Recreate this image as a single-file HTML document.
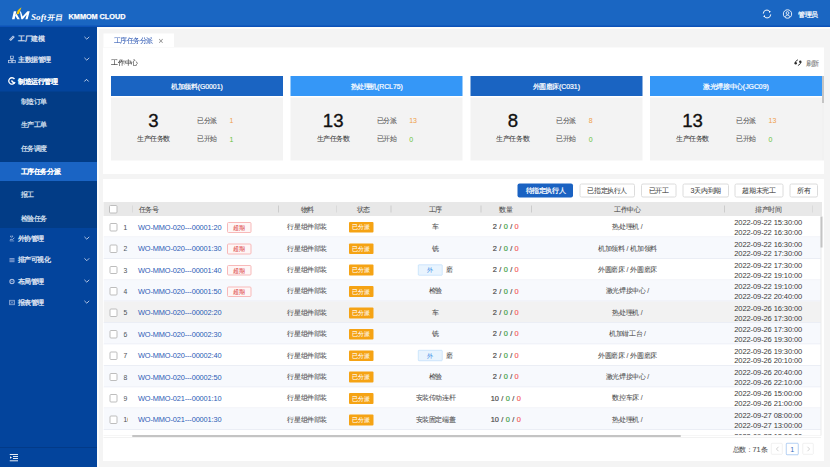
<!DOCTYPE html><html><head><meta charset="utf-8"><style>
*{margin:0;padding:0;box-sizing:border-box}
html,body{width:830px;height:467px;overflow:hidden;background:#f4f4f4;font-family:"Liberation Sans",sans-serif;color:#333;font-size:13.2px;position:relative}
.a{position:absolute;white-space:nowrap;-webkit-text-stroke-width:0.12px}
</style></head><body><div style="position:absolute;left:0;top:0;width:1660px;height:934px;transform:scale(0.5);transform-origin:0 0"><div class="a" style="left:0px;top:0px;width:1660px;height:54px;background:#1a66c2;"></div>
<div class="a" style="left:0px;top:51.2px;width:1660px;height:2.8px;background:#0c52b8;"></div>
<div class="a" style="left:194px;top:54px;width:1466px;height:4.4px;background:#fdfdfb;"></div>
<svg class="a" style="left:0;top:0" width="140" height="54" viewBox="0 0 70 27">
<path d="M12.0 19.3 L14.6 19.3 L16.3 11.2 L13.8 11.2 Z" fill="#fff"/>
<path d="M15.0 15.2 L16.4 13.6 L19.8 19.3 L17.4 19.3 Z" fill="#fff"/>
<path d="M16.5 14.3 C16.7 11.4 18.5 9.0 21.5 7.3 C20.6 9.6 19.7 11.8 18.9 14.0 Z" fill="#f3c70c"/>
<path d="M19.9 11.5 L20.9 11.5 L22.6 16.4 L27.4 11.2 L29.7 11.2 L27.6 19.3 L25.4 19.3 L26.7 14.4 L22.8 19.3 L21.3 19.3 Z" fill="#fff"/>
<text x="31" y="19.7" font-family="Liberation Serif" font-style="italic" font-weight="bold" font-size="7.8" textLength="15.2" lengthAdjust="spacingAndGlyphs" fill="#fff">Soft</text>
<text x="47" y="19.7" font-size="7" font-weight="bold" textLength="15.6" lengthAdjust="spacingAndGlyphs" fill="#fff" transform="translate(47 19.7) skewX(-8) translate(-47 -19.7)">开目</text>
</svg>
<div class="a" style="left:137.2px;top:19.8px;line-height:24px;font-size:14.6px;color:#fff;-webkit-text-stroke-width:0;font-weight:bold;letter-spacing:-0.06px;-webkit-text-stroke-width:0.5px">KMMOM CLOUD</div>
<svg class="a" style="left:1524px;top:18px" width="20" height="20" viewBox="0 0 10 10">
<path d="M1.3 4.6 A3.5 3.5 0 0 1 7.9 2.9" fill="none" stroke="#fff" stroke-width="0.95"/>
<path d="M8.7 5.4 A3.5 3.5 0 0 1 2.1 7.1" fill="none" stroke="#fff" stroke-width="0.95"/>
<path d="M6.7 1.5 L8.9 2.6 L7.2 4.1 Z" fill="#fff"/>
<path d="M3.3 8.5 L1.1 7.4 L2.8 5.9 Z" fill="#fff"/>
</svg>
<svg class="a" style="left:1565px;top:17.6px" width="20" height="20" viewBox="0 0 10 10">
<circle cx="5" cy="5" r="4.2" fill="none" stroke="#fff" stroke-width="0.9"/>
<circle cx="5" cy="4" r="1.4" fill="none" stroke="#fff" stroke-width="0.8"/>
<path d="M2.8 7.8 Q3.1 6 5 6 Q6.9 6 7.2 7.8" fill="none" stroke="#fff" stroke-width="0.8"/>
</svg>
<div class="a" style="left:1596.4px;top:16.6px;line-height:24px;font-size:13px;letter-spacing:0.2px;color:#fff;-webkit-text-stroke-width:0.44px">管理员</div>
<div class="a" style="left:0px;top:54px;width:194px;height:880px;background:#03449c;"></div>
<div class="a" style="left:194px;top:54px;width:4px;height:880px;background:#fbfcfd;"></div>
<div class="a" style="left:0px;top:183.4px;width:194px;height:272.8px;background:#023c86;"></div>
<div class="a" style="left:0px;top:323.6px;width:194px;height:38.4px;background:#1a64c4;"></div>
<div class="a" style="left:36px;top:64.6px;line-height:24px;font-size:13px;letter-spacing:0.2px;color:#e4eaf5;-webkit-text-stroke-width:0.5px">工厂建模</div>
<svg class="a" style="left:167px;top:69.6px" width="14" height="12" viewBox="0 0 7 6"><path d="M0.9 1.8 L3.3 4.2 L5.7 1.8" fill="none" stroke="#b9c9e6" stroke-width="0.95"/></svg>
<div class="a" style="left:36px;top:107.4px;line-height:24px;font-size:13px;letter-spacing:0.2px;color:#e4eaf5;-webkit-text-stroke-width:0.5px">主数据管理</div>
<svg class="a" style="left:167px;top:112.4px" width="14" height="12" viewBox="0 0 7 6"><path d="M0.9 1.8 L3.3 4.2 L5.7 1.8" fill="none" stroke="#b9c9e6" stroke-width="0.95"/></svg>
<div class="a" style="left:36px;top:151.4px;line-height:24px;font-size:13px;letter-spacing:0.2px;color:#fff;font-weight:bold;">制造运行管理</div>
<svg class="a" style="left:167px;top:155.4px" width="12" height="12" viewBox="0 0 6 6"><path d="M0.8 4 L3 1.8 L5.2 4" fill="none" stroke="#dce5f3" stroke-width="0.9"/></svg>
<svg class="a" style="left:16px;top:68px" width="16" height="16" viewBox="0 0 8 8"><path d="M1.0 5.4 L5.0 1.4 L6.8 3.0 L2.8 7.0 Z" fill="#c3d0e9"/><path d="M2.2 5.6 L5.2 2.6" stroke="#03449c" stroke-width="0.5"/></svg>
<svg class="a" style="left:16px;top:111.2px" width="16" height="16" viewBox="0 0 8 8"><rect x="2.5" y="0.5" width="2.8" height="2.4" fill="none" stroke="#c3d0e9" stroke-width="0.75"/><path d="M3.9 2.9V4.3M2.1 4.3H5.7M2.1 4.3V4.9M5.7 4.3V4.9" stroke="#c3d0e9" stroke-width="0.6"/><rect x="0.6" y="4.9" width="3" height="2.4" fill="none" stroke="#c3d0e9" stroke-width="0.75"/><rect x="4.3" y="4.9" width="3" height="2.4" fill="none" stroke="#c3d0e9" stroke-width="0.75"/></svg>
<svg class="a" style="left:16px;top:154px" width="16" height="16" viewBox="0 0 8 8"><path d="M6.5 2.0 A3.2 3.2 0 1 0 7.0 5.0" fill="none" stroke="#fff" stroke-width="1.3"/><path d="M3.4 3.4 L6.3 6.5" stroke="#fff" stroke-width="1.5"/></svg>
<div class="a" style="left:41.4px;top:191.2px;line-height:24px;font-size:13px;letter-spacing:0.2px;color:#d8e0ef;-webkit-text-stroke-width:0.44px">制造订单</div>
<div class="a" style="left:41.4px;top:238.2px;line-height:24px;font-size:13px;letter-spacing:0.2px;color:#d8e0ef;-webkit-text-stroke-width:0.44px">生产工单</div>
<div class="a" style="left:41.4px;top:285.4px;line-height:24px;font-size:13px;letter-spacing:0.2px;color:#d8e0ef;-webkit-text-stroke-width:0.44px">任务调度</div>
<div class="a" style="left:41.4px;top:331.8px;line-height:24px;font-size:13px;letter-spacing:0.2px;color:#fff;font-weight:bold;">工序任务分派</div>
<div class="a" style="left:41.4px;top:378.2px;line-height:24px;font-size:13px;letter-spacing:0.2px;color:#d8e0ef;-webkit-text-stroke-width:0.44px">报工</div>
<div class="a" style="left:41.4px;top:424.8px;line-height:24px;font-size:13px;letter-spacing:0.2px;color:#d8e0ef;-webkit-text-stroke-width:0.44px">检验任务</div>
<div class="a" style="left:35px;top:464.6px;line-height:24px;font-size:13px;letter-spacing:0.2px;color:#e4eaf5;-webkit-text-stroke-width:0.5px">外协管理</div>
<svg class="a" style="left:167px;top:469.6px" width="14" height="12" viewBox="0 0 7 6"><path d="M0.9 1.8 L3.3 4.2 L5.7 1.8" fill="none" stroke="#b9c9e6" stroke-width="0.95"/></svg>
<svg class="a" style="left:18px;top:470.6px" width="12" height="12" viewBox="0 0 6 6"><path d="M0.8 4.6 Q2.4 3.2 3.4 4.2 L5.4 2.2 M2.6 1.6 A1 1 0 1 1 2.61 1.6 M0.8 5.6 H5.2" fill="none" stroke="#a9bce0" stroke-width="0.9"/></svg>
<div class="a" style="left:35px;top:508px;line-height:24px;font-size:13px;letter-spacing:0.2px;color:#e4eaf5;-webkit-text-stroke-width:0.5px">排产可视化</div>
<svg class="a" style="left:167px;top:513px" width="14" height="12" viewBox="0 0 7 6"><path d="M0.9 1.8 L3.3 4.2 L5.7 1.8" fill="none" stroke="#b9c9e6" stroke-width="0.95"/></svg>
<svg class="a" style="left:18px;top:514px" width="12" height="12" viewBox="0 0 6 6"><rect x="0.5" y="1" width="5" height="4.2" fill="#7f9bd0"/><path d="M0.5 2.4H5.5M0.5 3.8H5.5" stroke="#03449c" stroke-width="0.4"/></svg>
<div class="a" style="left:35px;top:550.6px;line-height:24px;font-size:13px;letter-spacing:0.2px;color:#e4eaf5;-webkit-text-stroke-width:0.5px">布局管理</div>
<svg class="a" style="left:167px;top:555.6px" width="14" height="12" viewBox="0 0 7 6"><path d="M0.9 1.8 L3.3 4.2 L5.7 1.8" fill="none" stroke="#b9c9e6" stroke-width="0.95"/></svg>
<svg class="a" style="left:18px;top:556.6px" width="12" height="12" viewBox="0 0 6 6"><circle cx="3" cy="3" r="2.1" fill="none" stroke="#a9bce0" stroke-width="1.1"/><circle cx="3" cy="3" r="0.6" fill="#a9bce0"/></svg>
<div class="a" style="left:35px;top:593.4px;line-height:24px;font-size:13px;letter-spacing:0.2px;color:#e4eaf5;-webkit-text-stroke-width:0.5px">报表管理</div>
<svg class="a" style="left:167px;top:598.4px" width="14" height="12" viewBox="0 0 7 6"><path d="M0.9 1.8 L3.3 4.2 L5.7 1.8" fill="none" stroke="#b9c9e6" stroke-width="0.95"/></svg>
<svg class="a" style="left:18px;top:599.4px" width="12" height="12" viewBox="0 0 6 6"><rect x="0.7" y="0.7" width="4.6" height="4.6" fill="none" stroke="#a9bce0" stroke-width="0.8"/><path d="M1.6 1.6L4.4 4.4M4.4 1.6L1.6 4.4" stroke="#a9bce0" stroke-width="0.6"/></svg>
<div class="a" style="left:0px;top:894px;width:194px;height:2px;background:#023a88;"></div>
<svg class="a" style="left:19px;top:908px" width="18" height="16" viewBox="0 0 9 8">
<path d="M0 0.5H8.5M3.5 2.5H8.5M3.5 4.5H8.5M0 6.8H8.5" stroke="#fff" stroke-width="0.9"/>
<path d="M0.5 2.2 L2.5 3.5 L0.5 4.8 Z" fill="#fff"/>
</svg>
<div class="a" style="left:207.2px;top:67.2px;width:140.4px;height:26.8px;background:#fff;"></div>
<div class="a" style="left:227px;top:69.4px;line-height:24px;font-size:13px;letter-spacing:0.2px;color:#3d64b8;">工序任务分派</div>
<div class="a" style="left:316.6px;top:69.2px;line-height:24px;font-size:18px;color:#888;-webkit-text-stroke-width:0;-webkit-text-stroke-width:0">×</div>
<div class="a" style="left:206px;top:94.8px;width:1442px;height:253.2px;background:#fff;"></div>
<div class="a" style="left:222.8px;top:113.6px;line-height:24px;font-size:13px;letter-spacing:0.2px;color:#333;">工作中心</div>
<svg class="a" style="left:1588px;top:117px" width="16" height="16" viewBox="0 0 8 8">
<circle cx="1.7" cy="4.8" r="1.2" fill="#2a2a2a"/><path d="M1.0 4.6 Q1.4 2.2 4.0 1.2" fill="none" stroke="#2a2a2a" stroke-width="0.85"/>
<circle cx="6.3" cy="3.3" r="1.2" fill="#2a2a2a"/><path d="M7.0 3.5 Q6.6 6.0 3.9 7.1" fill="none" stroke="#2a2a2a" stroke-width="0.85"/>
</svg>
<div class="a" style="left:1611.2px;top:114.8px;line-height:24px;font-size:13px;letter-spacing:0.2px;color:#777;">刷新</div>
<div class="a" style="left:222px;top:195.2px;width:344px;height:125.6px;background:#f3f3f3;"></div>
<div class="a" style="left:222px;top:152px;width:344px;height:40px;background:#1a64c2;"></div>
<div class="a" style="left:222px;top:162px;line-height:24px;font-size:13px;letter-spacing:0.2px;color:#fff;width:344px;text-align:center;-webkit-text-stroke-width:0.4px">机加领料<span style="letter-spacing:0;font-size:13.7px">(G0001)</span></div>
<div class="a" style="left:222px;top:226.8px;line-height:24px;font-size:37.2px;color:#111;-webkit-text-stroke-width:0;width:170px;text-align:center;line-height:44px;top:218.8px;-webkit-text-stroke-width:0.7px">3</div>
<div class="a" style="left:222px;top:266.2px;line-height:24px;font-size:13px;letter-spacing:0.2px;color:#444;width:170px;text-align:center;">生产任务数</div>
<div class="a" style="left:394px;top:229px;line-height:24px;font-size:13px;letter-spacing:0.2px;color:#555;">已分派</div>
<div class="a" style="left:394px;top:265.6px;line-height:24px;font-size:13px;letter-spacing:0.2px;color:#555;">已开始</div>
<div class="a" style="left:459px;top:229px;line-height:24px;font-size:14px;color:#f0a04a;-webkit-text-stroke-width:0;">1</div>
<div class="a" style="left:459px;top:265.6px;line-height:24px;font-size:14px;color:#67c23a;-webkit-text-stroke-width:0;">1</div>
<div class="a" style="left:581.4px;top:195.2px;width:344px;height:125.6px;background:#f3f3f3;"></div>
<div class="a" style="left:581.4px;top:152px;width:344px;height:40px;background:#3597f7;"></div>
<div class="a" style="left:581.4px;top:162px;line-height:24px;font-size:13px;letter-spacing:0.2px;color:#fff;width:344px;text-align:center;-webkit-text-stroke-width:0.4px">热处理机<span style="letter-spacing:0;font-size:13.7px">(RCL75)</span></div>
<div class="a" style="left:581.4px;top:226.8px;line-height:24px;font-size:37.2px;color:#111;-webkit-text-stroke-width:0;width:170px;text-align:center;line-height:44px;top:218.8px;-webkit-text-stroke-width:0.7px">13</div>
<div class="a" style="left:581.4px;top:266.2px;line-height:24px;font-size:13px;letter-spacing:0.2px;color:#444;width:170px;text-align:center;">生产任务数</div>
<div class="a" style="left:753.4px;top:229px;line-height:24px;font-size:13px;letter-spacing:0.2px;color:#555;">已分派</div>
<div class="a" style="left:753.4px;top:265.6px;line-height:24px;font-size:13px;letter-spacing:0.2px;color:#555;">已开始</div>
<div class="a" style="left:818.4px;top:229px;line-height:24px;font-size:14px;color:#f0a04a;-webkit-text-stroke-width:0;">13</div>
<div class="a" style="left:818.4px;top:265.6px;line-height:24px;font-size:14px;color:#67c23a;-webkit-text-stroke-width:0;">0</div>
<div class="a" style="left:940.6px;top:195.2px;width:344px;height:125.6px;background:#f3f3f3;"></div>
<div class="a" style="left:940.6px;top:152px;width:344px;height:40px;background:#1a64c2;"></div>
<div class="a" style="left:940.6px;top:162px;line-height:24px;font-size:13px;letter-spacing:0.2px;color:#fff;width:344px;text-align:center;-webkit-text-stroke-width:0.4px">外圆磨床<span style="letter-spacing:0;font-size:13.7px">(C031)</span></div>
<div class="a" style="left:940.6px;top:226.8px;line-height:24px;font-size:37.2px;color:#111;-webkit-text-stroke-width:0;width:170px;text-align:center;line-height:44px;top:218.8px;-webkit-text-stroke-width:0.7px">8</div>
<div class="a" style="left:940.6px;top:266.2px;line-height:24px;font-size:13px;letter-spacing:0.2px;color:#444;width:170px;text-align:center;">生产任务数</div>
<div class="a" style="left:1112.6px;top:229px;line-height:24px;font-size:13px;letter-spacing:0.2px;color:#555;">已分派</div>
<div class="a" style="left:1112.6px;top:265.6px;line-height:24px;font-size:13px;letter-spacing:0.2px;color:#555;">已开始</div>
<div class="a" style="left:1177.6px;top:229px;line-height:24px;font-size:14px;color:#f0a04a;-webkit-text-stroke-width:0;">8</div>
<div class="a" style="left:1177.6px;top:265.6px;line-height:24px;font-size:14px;color:#67c23a;-webkit-text-stroke-width:0;">0</div>
<div class="a" style="left:1300px;top:195.2px;width:344px;height:125.6px;background:#f3f3f3;"></div>
<div class="a" style="left:1300px;top:152px;width:344px;height:40px;background:#3597f7;"></div>
<div class="a" style="left:1300px;top:162px;line-height:24px;font-size:13px;letter-spacing:0.2px;color:#fff;width:344px;text-align:center;-webkit-text-stroke-width:0.4px">激光焊接中心<span style="letter-spacing:0;font-size:13.7px">(JGC09)</span></div>
<div class="a" style="left:1300px;top:226.8px;line-height:24px;font-size:37.2px;color:#111;-webkit-text-stroke-width:0;width:170px;text-align:center;line-height:44px;top:218.8px;-webkit-text-stroke-width:0.7px">13</div>
<div class="a" style="left:1300px;top:266.2px;line-height:24px;font-size:13px;letter-spacing:0.2px;color:#444;width:170px;text-align:center;">生产任务数</div>
<div class="a" style="left:1472px;top:229px;line-height:24px;font-size:13px;letter-spacing:0.2px;color:#555;">已分派</div>
<div class="a" style="left:1472px;top:265.6px;line-height:24px;font-size:13px;letter-spacing:0.2px;color:#555;">已开始</div>
<div class="a" style="left:1537px;top:229px;line-height:24px;font-size:14px;color:#f0a04a;-webkit-text-stroke-width:0;">13</div>
<div class="a" style="left:1537px;top:265.6px;line-height:24px;font-size:14px;color:#67c23a;-webkit-text-stroke-width:0;">0</div>
<div class="a" style="left:1644px;top:195.2px;width:4px;height:125.6px;background:#f1f1f1;"></div>
<div class="a" style="left:1644px;top:152px;width:4px;height:54px;background:#c4c4c4;"></div>
<div class="a" style="left:206px;top:358px;width:1442px;height:564px;background:#fff;"></div>
<div class="a" style="left:1035.4px;top:366.6px;width:110.6px;height:28.8px;background:#1a62c2;border-radius:4px"></div>
<div class="a" style="left:1035.4px;top:369.4px;line-height:24px;font-size:13px;letter-spacing:0.2px;color:#fff;width:110.6px;text-align:center;-webkit-text-stroke-width:0.44px">待指定执行人</div>
<div class="a" style="left:1158.8px;top:366.6px;width:111.2px;height:28.8px;background:#fff;border:2px solid #dcdcdc;border-radius:4px"></div>
<div class="a" style="left:1158.8px;top:369.4px;line-height:24px;font-size:13px;letter-spacing:0.2px;color:#444;width:111.2px;text-align:center;">已指定执行人</div>
<div class="a" style="left:1282px;top:366.6px;width:71px;height:28.8px;background:#fff;border:2px solid #dcdcdc;border-radius:4px"></div>
<div class="a" style="left:1282px;top:369.4px;line-height:24px;font-size:13px;letter-spacing:0.2px;color:#444;width:71px;text-align:center;">已开工</div>
<div class="a" style="left:1365px;top:366.6px;width:93px;height:28.8px;background:#fff;border:2px solid #dcdcdc;border-radius:4px"></div>
<div class="a" style="left:1365px;top:369.4px;line-height:24px;font-size:13px;letter-spacing:0.2px;color:#444;width:93px;text-align:center;"><span style="letter-spacing:0;font-size:14px">3</span>天内到期</div>
<div class="a" style="left:1468.6px;top:366.6px;width:98.4px;height:28.8px;background:#fff;border:2px solid #dcdcdc;border-radius:4px"></div>
<div class="a" style="left:1468.6px;top:369.4px;line-height:24px;font-size:13px;letter-spacing:0.2px;color:#444;width:98.4px;text-align:center;">超期未完工</div>
<div class="a" style="left:1579px;top:366.6px;width:57px;height:28.8px;background:#fff;border:2px solid #dcdcdc;border-radius:4px"></div>
<div class="a" style="left:1579px;top:369.4px;line-height:24px;font-size:13px;letter-spacing:0.2px;color:#444;width:57px;text-align:center;">所有</div>
<div class="a" style="left:206.8px;top:404px;width:1437.2px;height:28.4px;background:#e8e8e8;"></div>
<div class="a" style="left:218.4px;top:410.4px;width:17px;height:17px;border:2px solid #bdbdbd;border-radius:3px;background:#fff"></div>
<div class="a" style="left:264.8px;top:411px;width:1.6px;height:14px;background:#cccccc;"></div>
<div class="a" style="left:556px;top:411px;width:1.6px;height:14px;background:#cccccc;"></div>
<div class="a" style="left:672.6px;top:411px;width:1.6px;height:14px;background:#cccccc;"></div>
<div class="a" style="left:781px;top:411px;width:1.6px;height:14px;background:#cccccc;"></div>
<div class="a" style="left:961px;top:411px;width:1.6px;height:14px;background:#cccccc;"></div>
<div class="a" style="left:1062px;top:411px;width:1.6px;height:14px;background:#cccccc;"></div>
<div class="a" style="left:1448px;top:411px;width:1.6px;height:14px;background:#cccccc;"></div>
<div class="a" style="left:1624.8px;top:411px;width:1.6px;height:14px;background:#cccccc;"></div>
<div class="a" style="left:277.2px;top:407.6px;line-height:24px;font-size:13px;letter-spacing:0.2px;color:#505050;">任务号</div>
<div class="a" style="left:556px;top:407.6px;line-height:24px;font-size:13px;letter-spacing:0.2px;color:#505050;width:116.6px;text-align:center;">物料</div>
<div class="a" style="left:672.6px;top:407.6px;line-height:24px;font-size:13px;letter-spacing:0.2px;color:#505050;width:108.4px;text-align:center;">状态</div>
<div class="a" style="left:781px;top:407.6px;line-height:24px;font-size:13px;letter-spacing:0.2px;color:#505050;width:180px;text-align:center;">工序</div>
<div class="a" style="left:961px;top:407.6px;line-height:24px;font-size:13px;letter-spacing:0.2px;color:#505050;width:101px;text-align:center;">数量</div>
<div class="a" style="left:1062px;top:407.6px;line-height:24px;font-size:13px;letter-spacing:0.2px;color:#505050;width:386px;text-align:center;">工作中心</div>
<div class="a" style="left:1448px;top:407.6px;line-height:24px;font-size:13px;letter-spacing:0.2px;color:#505050;width:176.8px;text-align:center;">排产时间</div>
<div class="a" style="left:206.8px;top:432.2px;width:1435.2px;height:438px;overflow:hidden">
<div class="a" style="left:0;top:0px;width:1435.2px;height:42.8px;background:#ffffff;border-bottom:2px solid #ebeef5"></div>
<div class="a" style="left:0;top:42.8px;width:1435.2px;height:42.8px;background:#f7f9fd;border-bottom:2px solid #ebeef5"></div>
<div class="a" style="left:0;top:85.6px;width:1435.2px;height:42.8px;background:#ffffff;border-bottom:2px solid #ebeef5"></div>
<div class="a" style="left:0;top:128.4px;width:1435.2px;height:42.8px;background:#f7f9fd;border-bottom:2px solid #ebeef5"></div>
<div class="a" style="left:0;top:171.2px;width:1435.2px;height:42.8px;background:#f2f2f2;border-bottom:2px solid #ebeef5"></div>
<div class="a" style="left:0;top:214px;width:1435.2px;height:42.8px;background:#f7f9fd;border-bottom:2px solid #ebeef5"></div>
<div class="a" style="left:0;top:256.8px;width:1435.2px;height:42.8px;background:#ffffff;border-bottom:2px solid #ebeef5"></div>
<div class="a" style="left:0;top:299.6px;width:1435.2px;height:42.8px;background:#f7f9fd;border-bottom:2px solid #ebeef5"></div>
<div class="a" style="left:0;top:342.4px;width:1435.2px;height:42.8px;background:#ffffff;border-bottom:2px solid #ebeef5"></div>
<div class="a" style="left:0;top:385.2px;width:1435.2px;height:42.8px;background:#f7f9fd;border-bottom:2px solid #ebeef5"></div>
<div class="a" style="left:0;top:428px;width:1435.2px;height:42.8px;background:#ffffff;border-bottom:2px solid #ebeef5"></div>
<div class="a" style="left:1.2px;top:0;width:1434px;height:438px">
<div class="a" style="left:11px;top:13.8px;width:15.6px;height:16.8px;border:2px solid #bdbdbd;border-radius:3px;background:#fff"></div>
<div class="a" style="left:38.6px;top:9.8px;width:9.2px;overflow:hidden;line-height:24px;font-size:14.6px;color:#555;-webkit-text-stroke-width:0">1</div>
<div class="a" style="left:68px;top:10px;line-height:24px;font-size:14.8px;color:#2c5bb5;-webkit-text-stroke-width:0;letter-spacing:-0.28px">WO-MMO-020---00001:20</div>
<div class="a" style="left:246px;top:12.2px;width:48.6px;height:21.4px;border:2px solid #f8b9b9;background:#fef6f6;border-radius:3px"></div>
<div class="a" style="left:246px;top:10.8px;line-height:24px;font-size:12px;letter-spacing:0.4px;color:#e04a4a;width:48.6px;text-align:center;">超期</div>
<div class="a" style="left:348px;top:9.8px;line-height:24px;font-size:13px;letter-spacing:0.2px;color:#505050;width:116.6px;text-align:center;">行星组件部装</div>
<div class="a" style="left:490px;top:11.6px;width:49.4px;height:21.6px;background:#f5a314;border-radius:2px"></div>
<div class="a" style="left:490px;top:10px;line-height:24px;font-size:12px;letter-spacing:0px;color:#fff;width:49.4px;text-align:center;">已分派</div>
<div class="a" style="left:573px;top:9.8px;line-height:24px;font-size:13px;letter-spacing:0.2px;color:#505050;width:180px;text-align:center;">车</div>
<div class="a" style="left:753px;top:9px;line-height:24px;font-size:14.8px;color:#4a4a4a;-webkit-text-stroke-width:0;width:101px;text-align:center;word-spacing:0.6px;-webkit-text-stroke-width:0.36px">2 / <span style="color:#3f9f47">0</span> / <span style="color:#f45f5f">0</span></div>
<div class="a" style="left:854px;top:9.8px;line-height:24px;font-size:13px;letter-spacing:0.2px;color:#505050;width:386px;text-align:center;">热处理机<span style="letter-spacing:0;font-size:13.6px"> /</span></div>
<div class="a" style="left:1240px;top:0.8px;line-height:24px;font-size:15.1px;color:#3c3c3c;-webkit-text-stroke-width:0;width:176.8px;text-align:center;letter-spacing:-0.24px">2022-09-22 15:30:00</div>
<div class="a" style="left:1240px;top:20.4px;line-height:24px;font-size:15.1px;color:#3c3c3c;-webkit-text-stroke-width:0;width:176.8px;text-align:center;letter-spacing:-0.24px">2022-09-22 16:30:00</div>
<div class="a" style="left:11px;top:56.6px;width:15.6px;height:16.8px;border:2px solid #bdbdbd;border-radius:3px;background:#fff"></div>
<div class="a" style="left:38.6px;top:52.6px;width:9.2px;overflow:hidden;line-height:24px;font-size:14.6px;color:#555;-webkit-text-stroke-width:0">2</div>
<div class="a" style="left:68px;top:52.8px;line-height:24px;font-size:14.8px;color:#2c5bb5;-webkit-text-stroke-width:0;letter-spacing:-0.28px">WO-MMO-020---00001:30</div>
<div class="a" style="left:246px;top:55px;width:48.6px;height:21.4px;border:2px solid #f8b9b9;background:#fef6f6;border-radius:3px"></div>
<div class="a" style="left:246px;top:53.6px;line-height:24px;font-size:12px;letter-spacing:0.4px;color:#e04a4a;width:48.6px;text-align:center;">超期</div>
<div class="a" style="left:348px;top:52.6px;line-height:24px;font-size:13px;letter-spacing:0.2px;color:#505050;width:116.6px;text-align:center;">行星组件部装</div>
<div class="a" style="left:490px;top:54.4px;width:49.4px;height:21.6px;background:#f5a314;border-radius:2px"></div>
<div class="a" style="left:490px;top:52.8px;line-height:24px;font-size:12px;letter-spacing:0px;color:#fff;width:49.4px;text-align:center;">已分派</div>
<div class="a" style="left:573px;top:52.6px;line-height:24px;font-size:13px;letter-spacing:0.2px;color:#505050;width:180px;text-align:center;">铣</div>
<div class="a" style="left:753px;top:51.8px;line-height:24px;font-size:14.8px;color:#4a4a4a;-webkit-text-stroke-width:0;width:101px;text-align:center;word-spacing:0.6px;-webkit-text-stroke-width:0.36px">2 / <span style="color:#3f9f47">0</span> / <span style="color:#f45f5f">0</span></div>
<div class="a" style="left:854px;top:52.6px;line-height:24px;font-size:13px;letter-spacing:0.2px;color:#505050;width:386px;text-align:center;">机加领料<span style="letter-spacing:0;font-size:13.6px"> / </span>机加领料</div>
<div class="a" style="left:1240px;top:43.6px;line-height:24px;font-size:15.1px;color:#3c3c3c;-webkit-text-stroke-width:0;width:176.8px;text-align:center;letter-spacing:-0.24px">2022-09-22 16:30:00</div>
<div class="a" style="left:1240px;top:63.2px;line-height:24px;font-size:15.1px;color:#3c3c3c;-webkit-text-stroke-width:0;width:176.8px;text-align:center;letter-spacing:-0.24px">2022-09-22 17:30:00</div>
<div class="a" style="left:11px;top:99.4px;width:15.6px;height:16.8px;border:2px solid #bdbdbd;border-radius:3px;background:#fff"></div>
<div class="a" style="left:38.6px;top:95.4px;width:9.2px;overflow:hidden;line-height:24px;font-size:14.6px;color:#555;-webkit-text-stroke-width:0">3</div>
<div class="a" style="left:68px;top:95.6px;line-height:24px;font-size:14.8px;color:#2c5bb5;-webkit-text-stroke-width:0;letter-spacing:-0.28px">WO-MMO-020---00001:40</div>
<div class="a" style="left:246px;top:97.8px;width:48.6px;height:21.4px;border:2px solid #f8b9b9;background:#fef6f6;border-radius:3px"></div>
<div class="a" style="left:246px;top:96.4px;line-height:24px;font-size:12px;letter-spacing:0.4px;color:#e04a4a;width:48.6px;text-align:center;">超期</div>
<div class="a" style="left:348px;top:95.4px;line-height:24px;font-size:13px;letter-spacing:0.2px;color:#505050;width:116.6px;text-align:center;">行星组件部装</div>
<div class="a" style="left:490px;top:97.2px;width:49.4px;height:21.6px;background:#f5a314;border-radius:2px"></div>
<div class="a" style="left:490px;top:95.6px;line-height:24px;font-size:12px;letter-spacing:0px;color:#fff;width:49.4px;text-align:center;">已分派</div>
<div class="a" style="left:628px;top:96.9px;width:48.8px;height:21.6px;border:1.6px solid #a9d2f8;background:#e9f4fe;border-radius:2px"></div>
<div class="a" style="left:628px;top:95.6px;line-height:24px;font-size:12px;letter-spacing:0px;color:#3d8ee8;width:48.8px;text-align:center;">外</div>
<div class="a" style="left:684px;top:95.4px;line-height:24px;font-size:13px;letter-spacing:0.2px;color:#505050;">磨</div>
<div class="a" style="left:753px;top:94.6px;line-height:24px;font-size:14.8px;color:#4a4a4a;-webkit-text-stroke-width:0;width:101px;text-align:center;word-spacing:0.6px;-webkit-text-stroke-width:0.36px">2 / <span style="color:#3f9f47">0</span> / <span style="color:#f45f5f">0</span></div>
<div class="a" style="left:854px;top:95.4px;line-height:24px;font-size:13px;letter-spacing:0.2px;color:#505050;width:386px;text-align:center;">外圆磨床<span style="letter-spacing:0;font-size:13.6px"> / </span>外圆磨床</div>
<div class="a" style="left:1240px;top:86.4px;line-height:24px;font-size:15.1px;color:#3c3c3c;-webkit-text-stroke-width:0;width:176.8px;text-align:center;letter-spacing:-0.24px">2022-09-22 17:30:00</div>
<div class="a" style="left:1240px;top:106px;line-height:24px;font-size:15.1px;color:#3c3c3c;-webkit-text-stroke-width:0;width:176.8px;text-align:center;letter-spacing:-0.24px">2022-09-22 19:10:00</div>
<div class="a" style="left:11px;top:142.2px;width:15.6px;height:16.8px;border:2px solid #bdbdbd;border-radius:3px;background:#fff"></div>
<div class="a" style="left:38.6px;top:138.2px;width:9.2px;overflow:hidden;line-height:24px;font-size:14.6px;color:#555;-webkit-text-stroke-width:0">4</div>
<div class="a" style="left:68px;top:138.4px;line-height:24px;font-size:14.8px;color:#2c5bb5;-webkit-text-stroke-width:0;letter-spacing:-0.28px">WO-MMO-020---00001:50</div>
<div class="a" style="left:246px;top:140.6px;width:48.6px;height:21.4px;border:2px solid #f8b9b9;background:#fef6f6;border-radius:3px"></div>
<div class="a" style="left:246px;top:139.2px;line-height:24px;font-size:12px;letter-spacing:0.4px;color:#e04a4a;width:48.6px;text-align:center;">超期</div>
<div class="a" style="left:348px;top:138.2px;line-height:24px;font-size:13px;letter-spacing:0.2px;color:#505050;width:116.6px;text-align:center;">行星组件部装</div>
<div class="a" style="left:490px;top:140px;width:49.4px;height:21.6px;background:#f5a314;border-radius:2px"></div>
<div class="a" style="left:490px;top:138.4px;line-height:24px;font-size:12px;letter-spacing:0px;color:#fff;width:49.4px;text-align:center;">已分派</div>
<div class="a" style="left:573px;top:138.2px;line-height:24px;font-size:13px;letter-spacing:0.2px;color:#505050;width:180px;text-align:center;">检验</div>
<div class="a" style="left:753px;top:137.4px;line-height:24px;font-size:14.8px;color:#4a4a4a;-webkit-text-stroke-width:0;width:101px;text-align:center;word-spacing:0.6px;-webkit-text-stroke-width:0.36px">2 / <span style="color:#3f9f47">0</span> / <span style="color:#f45f5f">0</span></div>
<div class="a" style="left:854px;top:138.2px;line-height:24px;font-size:13px;letter-spacing:0.2px;color:#505050;width:386px;text-align:center;">激光焊接中心<span style="letter-spacing:0;font-size:13.6px"> /</span></div>
<div class="a" style="left:1240px;top:129.2px;line-height:24px;font-size:15.1px;color:#3c3c3c;-webkit-text-stroke-width:0;width:176.8px;text-align:center;letter-spacing:-0.24px">2022-09-22 19:10:00</div>
<div class="a" style="left:1240px;top:148.8px;line-height:24px;font-size:15.1px;color:#3c3c3c;-webkit-text-stroke-width:0;width:176.8px;text-align:center;letter-spacing:-0.24px">2022-09-22 20:40:00</div>
<div class="a" style="left:11px;top:185px;width:15.6px;height:16.8px;border:2px solid #bdbdbd;border-radius:3px;background:#fff"></div>
<div class="a" style="left:38.6px;top:181px;width:9.2px;overflow:hidden;line-height:24px;font-size:14.6px;color:#555;-webkit-text-stroke-width:0">5</div>
<div class="a" style="left:68px;top:181.2px;line-height:24px;font-size:14.8px;color:#2c5bb5;-webkit-text-stroke-width:0;letter-spacing:-0.28px">WO-MMO-020---00002:20</div>
<div class="a" style="left:348px;top:181px;line-height:24px;font-size:13px;letter-spacing:0.2px;color:#505050;width:116.6px;text-align:center;">行星组件部装</div>
<div class="a" style="left:490px;top:182.8px;width:49.4px;height:21.6px;background:#f5a314;border-radius:2px"></div>
<div class="a" style="left:490px;top:181.2px;line-height:24px;font-size:12px;letter-spacing:0px;color:#fff;width:49.4px;text-align:center;">已分派</div>
<div class="a" style="left:573px;top:181px;line-height:24px;font-size:13px;letter-spacing:0.2px;color:#505050;width:180px;text-align:center;">车</div>
<div class="a" style="left:753px;top:180.2px;line-height:24px;font-size:14.8px;color:#4a4a4a;-webkit-text-stroke-width:0;width:101px;text-align:center;word-spacing:0.6px;-webkit-text-stroke-width:0.36px">2 / <span style="color:#3f9f47">0</span> / <span style="color:#f45f5f">0</span></div>
<div class="a" style="left:854px;top:181px;line-height:24px;font-size:13px;letter-spacing:0.2px;color:#505050;width:386px;text-align:center;">热处理机<span style="letter-spacing:0;font-size:13.6px"> /</span></div>
<div class="a" style="left:1240px;top:172px;line-height:24px;font-size:15.1px;color:#3c3c3c;-webkit-text-stroke-width:0;width:176.8px;text-align:center;letter-spacing:-0.24px">2022-09-26 16:30:00</div>
<div class="a" style="left:1240px;top:191.6px;line-height:24px;font-size:15.1px;color:#3c3c3c;-webkit-text-stroke-width:0;width:176.8px;text-align:center;letter-spacing:-0.24px">2022-09-26 17:30:00</div>
<div class="a" style="left:11px;top:227.8px;width:15.6px;height:16.8px;border:2px solid #bdbdbd;border-radius:3px;background:#fff"></div>
<div class="a" style="left:38.6px;top:223.8px;width:9.2px;overflow:hidden;line-height:24px;font-size:14.6px;color:#555;-webkit-text-stroke-width:0">6</div>
<div class="a" style="left:68px;top:224px;line-height:24px;font-size:14.8px;color:#2c5bb5;-webkit-text-stroke-width:0;letter-spacing:-0.28px">WO-MMO-020---00002:30</div>
<div class="a" style="left:348px;top:223.8px;line-height:24px;font-size:13px;letter-spacing:0.2px;color:#505050;width:116.6px;text-align:center;">行星组件部装</div>
<div class="a" style="left:490px;top:225.6px;width:49.4px;height:21.6px;background:#f5a314;border-radius:2px"></div>
<div class="a" style="left:490px;top:224px;line-height:24px;font-size:12px;letter-spacing:0px;color:#fff;width:49.4px;text-align:center;">已分派</div>
<div class="a" style="left:573px;top:223.8px;line-height:24px;font-size:13px;letter-spacing:0.2px;color:#505050;width:180px;text-align:center;">铣</div>
<div class="a" style="left:753px;top:223px;line-height:24px;font-size:14.8px;color:#4a4a4a;-webkit-text-stroke-width:0;width:101px;text-align:center;word-spacing:0.6px;-webkit-text-stroke-width:0.36px">2 / <span style="color:#3f9f47">0</span> / <span style="color:#f45f5f">0</span></div>
<div class="a" style="left:854px;top:223.8px;line-height:24px;font-size:13px;letter-spacing:0.2px;color:#505050;width:386px;text-align:center;">机加钳工台<span style="letter-spacing:0;font-size:13.6px"> /</span></div>
<div class="a" style="left:1240px;top:214.8px;line-height:24px;font-size:15.1px;color:#3c3c3c;-webkit-text-stroke-width:0;width:176.8px;text-align:center;letter-spacing:-0.24px">2022-09-26 17:30:00</div>
<div class="a" style="left:1240px;top:234.4px;line-height:24px;font-size:15.1px;color:#3c3c3c;-webkit-text-stroke-width:0;width:176.8px;text-align:center;letter-spacing:-0.24px">2022-09-26 19:30:00</div>
<div class="a" style="left:11px;top:270.6px;width:15.6px;height:16.8px;border:2px solid #bdbdbd;border-radius:3px;background:#fff"></div>
<div class="a" style="left:38.6px;top:266.6px;width:9.2px;overflow:hidden;line-height:24px;font-size:14.6px;color:#555;-webkit-text-stroke-width:0">7</div>
<div class="a" style="left:68px;top:266.8px;line-height:24px;font-size:14.8px;color:#2c5bb5;-webkit-text-stroke-width:0;letter-spacing:-0.28px">WO-MMO-020---00002:40</div>
<div class="a" style="left:348px;top:266.6px;line-height:24px;font-size:13px;letter-spacing:0.2px;color:#505050;width:116.6px;text-align:center;">行星组件部装</div>
<div class="a" style="left:490px;top:268.4px;width:49.4px;height:21.6px;background:#f5a314;border-radius:2px"></div>
<div class="a" style="left:490px;top:266.8px;line-height:24px;font-size:12px;letter-spacing:0px;color:#fff;width:49.4px;text-align:center;">已分派</div>
<div class="a" style="left:628px;top:268.1px;width:48.8px;height:21.6px;border:1.6px solid #a9d2f8;background:#e9f4fe;border-radius:2px"></div>
<div class="a" style="left:628px;top:266.8px;line-height:24px;font-size:12px;letter-spacing:0px;color:#3d8ee8;width:48.8px;text-align:center;">外</div>
<div class="a" style="left:684px;top:266.6px;line-height:24px;font-size:13px;letter-spacing:0.2px;color:#505050;">磨</div>
<div class="a" style="left:753px;top:265.8px;line-height:24px;font-size:14.8px;color:#4a4a4a;-webkit-text-stroke-width:0;width:101px;text-align:center;word-spacing:0.6px;-webkit-text-stroke-width:0.36px">2 / <span style="color:#3f9f47">0</span> / <span style="color:#f45f5f">0</span></div>
<div class="a" style="left:854px;top:266.6px;line-height:24px;font-size:13px;letter-spacing:0.2px;color:#505050;width:386px;text-align:center;">外圆磨床<span style="letter-spacing:0;font-size:13.6px"> / </span>外圆磨床</div>
<div class="a" style="left:1240px;top:257.6px;line-height:24px;font-size:15.1px;color:#3c3c3c;-webkit-text-stroke-width:0;width:176.8px;text-align:center;letter-spacing:-0.24px">2022-09-26 19:30:00</div>
<div class="a" style="left:1240px;top:277.2px;line-height:24px;font-size:15.1px;color:#3c3c3c;-webkit-text-stroke-width:0;width:176.8px;text-align:center;letter-spacing:-0.24px">2022-09-26 20:10:00</div>
<div class="a" style="left:11px;top:313.4px;width:15.6px;height:16.8px;border:2px solid #bdbdbd;border-radius:3px;background:#fff"></div>
<div class="a" style="left:38.6px;top:309.4px;width:9.2px;overflow:hidden;line-height:24px;font-size:14.6px;color:#555;-webkit-text-stroke-width:0">8</div>
<div class="a" style="left:68px;top:309.6px;line-height:24px;font-size:14.8px;color:#2c5bb5;-webkit-text-stroke-width:0;letter-spacing:-0.28px">WO-MMO-020---00002:50</div>
<div class="a" style="left:348px;top:309.4px;line-height:24px;font-size:13px;letter-spacing:0.2px;color:#505050;width:116.6px;text-align:center;">行星组件部装</div>
<div class="a" style="left:490px;top:311.2px;width:49.4px;height:21.6px;background:#f5a314;border-radius:2px"></div>
<div class="a" style="left:490px;top:309.6px;line-height:24px;font-size:12px;letter-spacing:0px;color:#fff;width:49.4px;text-align:center;">已分派</div>
<div class="a" style="left:573px;top:309.4px;line-height:24px;font-size:13px;letter-spacing:0.2px;color:#505050;width:180px;text-align:center;">检验</div>
<div class="a" style="left:753px;top:308.6px;line-height:24px;font-size:14.8px;color:#4a4a4a;-webkit-text-stroke-width:0;width:101px;text-align:center;word-spacing:0.6px;-webkit-text-stroke-width:0.36px">2 / <span style="color:#3f9f47">0</span> / <span style="color:#f45f5f">0</span></div>
<div class="a" style="left:854px;top:309.4px;line-height:24px;font-size:13px;letter-spacing:0.2px;color:#505050;width:386px;text-align:center;">激光焊接中心<span style="letter-spacing:0;font-size:13.6px"> /</span></div>
<div class="a" style="left:1240px;top:300.4px;line-height:24px;font-size:15.1px;color:#3c3c3c;-webkit-text-stroke-width:0;width:176.8px;text-align:center;letter-spacing:-0.24px">2022-09-26 20:40:00</div>
<div class="a" style="left:1240px;top:320px;line-height:24px;font-size:15.1px;color:#3c3c3c;-webkit-text-stroke-width:0;width:176.8px;text-align:center;letter-spacing:-0.24px">2022-09-26 22:10:00</div>
<div class="a" style="left:11px;top:356.2px;width:15.6px;height:16.8px;border:2px solid #bdbdbd;border-radius:3px;background:#fff"></div>
<div class="a" style="left:38.6px;top:352.2px;width:9.2px;overflow:hidden;line-height:24px;font-size:14.6px;color:#555;-webkit-text-stroke-width:0">9</div>
<div class="a" style="left:68px;top:352.4px;line-height:24px;font-size:14.8px;color:#2c5bb5;-webkit-text-stroke-width:0;letter-spacing:-0.28px">WO-MMO-021---00001:10</div>
<div class="a" style="left:348px;top:352.2px;line-height:24px;font-size:13px;letter-spacing:0.2px;color:#505050;width:116.6px;text-align:center;">行星组件部装</div>
<div class="a" style="left:490px;top:354px;width:49.4px;height:21.6px;background:#f5a314;border-radius:2px"></div>
<div class="a" style="left:490px;top:352.4px;line-height:24px;font-size:12px;letter-spacing:0px;color:#fff;width:49.4px;text-align:center;">已分派</div>
<div class="a" style="left:573px;top:352.2px;line-height:24px;font-size:13px;letter-spacing:0.2px;color:#505050;width:180px;text-align:center;">安装传动连杆</div>
<div class="a" style="left:753px;top:351.4px;line-height:24px;font-size:14.8px;color:#4a4a4a;-webkit-text-stroke-width:0;width:101px;text-align:center;word-spacing:0.6px;-webkit-text-stroke-width:0.36px">10 / <span style="color:#3f9f47">0</span> / <span style="color:#f45f5f">0</span></div>
<div class="a" style="left:854px;top:352.2px;line-height:24px;font-size:13px;letter-spacing:0.2px;color:#505050;width:386px;text-align:center;">数控车床<span style="letter-spacing:0;font-size:13.6px"> /</span></div>
<div class="a" style="left:1240px;top:343.2px;line-height:24px;font-size:15.1px;color:#3c3c3c;-webkit-text-stroke-width:0;width:176.8px;text-align:center;letter-spacing:-0.24px">2022-09-26 15:00:00</div>
<div class="a" style="left:1240px;top:362.8px;line-height:24px;font-size:15.1px;color:#3c3c3c;-webkit-text-stroke-width:0;width:176.8px;text-align:center;letter-spacing:-0.24px">2022-09-26 21:00:00</div>
<div class="a" style="left:11px;top:399px;width:15.6px;height:16.8px;border:2px solid #bdbdbd;border-radius:3px;background:#fff"></div>
<div class="a" style="left:38.6px;top:395px;width:9.2px;overflow:hidden;line-height:24px;font-size:14.6px;color:#555;-webkit-text-stroke-width:0">10</div>
<div class="a" style="left:68px;top:395.2px;line-height:24px;font-size:14.8px;color:#2c5bb5;-webkit-text-stroke-width:0;letter-spacing:-0.28px">WO-MMO-021---00001:30</div>
<div class="a" style="left:348px;top:395px;line-height:24px;font-size:13px;letter-spacing:0.2px;color:#505050;width:116.6px;text-align:center;">行星组件部装</div>
<div class="a" style="left:490px;top:396.8px;width:49.4px;height:21.6px;background:#f5a314;border-radius:2px"></div>
<div class="a" style="left:490px;top:395.2px;line-height:24px;font-size:12px;letter-spacing:0px;color:#fff;width:49.4px;text-align:center;">已分派</div>
<div class="a" style="left:573px;top:395px;line-height:24px;font-size:13px;letter-spacing:0.2px;color:#505050;width:180px;text-align:center;">安装固定端盖</div>
<div class="a" style="left:753px;top:394.2px;line-height:24px;font-size:14.8px;color:#4a4a4a;-webkit-text-stroke-width:0;width:101px;text-align:center;word-spacing:0.6px;-webkit-text-stroke-width:0.36px">10 / <span style="color:#3f9f47">0</span> / <span style="color:#f45f5f">0</span></div>
<div class="a" style="left:854px;top:395px;line-height:24px;font-size:13px;letter-spacing:0.2px;color:#505050;width:386px;text-align:center;">热处理机<span style="letter-spacing:0;font-size:13.6px"> /</span></div>
<div class="a" style="left:1240px;top:386px;line-height:24px;font-size:15.1px;color:#3c3c3c;-webkit-text-stroke-width:0;width:176.8px;text-align:center;letter-spacing:-0.24px">2022-09-27 08:00:00</div>
<div class="a" style="left:1240px;top:405.6px;line-height:24px;font-size:15.1px;color:#3c3c3c;-webkit-text-stroke-width:0;width:176.8px;text-align:center;letter-spacing:-0.24px">2022-09-27 13:00:00</div>
<div class="a" style="left:11px;top:441.8px;width:15.6px;height:16.8px;border:2px solid #bdbdbd;border-radius:3px;background:#fff"></div>
<div class="a" style="left:38.6px;top:437.8px;width:9.2px;overflow:hidden;line-height:24px;font-size:14.6px;color:#555;-webkit-text-stroke-width:0">11</div>
<div class="a" style="left:68px;top:438px;line-height:24px;font-size:14.8px;color:#2c5bb5;-webkit-text-stroke-width:0;letter-spacing:-0.28px">WO-MMO-021---00001:40</div>
<div class="a" style="left:348px;top:437.8px;line-height:24px;font-size:13px;letter-spacing:0.2px;color:#505050;width:116.6px;text-align:center;">行星组件部装</div>
<div class="a" style="left:490px;top:439.6px;width:49.4px;height:21.6px;background:#f5a314;border-radius:2px"></div>
<div class="a" style="left:490px;top:438px;line-height:24px;font-size:12px;letter-spacing:0px;color:#fff;width:49.4px;text-align:center;">已分派</div>
<div class="a" style="left:573px;top:437.8px;line-height:24px;font-size:13px;letter-spacing:0.2px;color:#505050;width:180px;text-align:center;">车</div>
<div class="a" style="left:753px;top:437px;line-height:24px;font-size:14.8px;color:#4a4a4a;-webkit-text-stroke-width:0;width:101px;text-align:center;word-spacing:0.6px;-webkit-text-stroke-width:0.36px">10 / <span style="color:#3f9f47">0</span> / <span style="color:#f45f5f">0</span></div>
<div class="a" style="left:854px;top:437.8px;line-height:24px;font-size:13px;letter-spacing:0.2px;color:#505050;width:386px;text-align:center;">热处理机<span style="letter-spacing:0;font-size:13.6px"> /</span></div>
<div class="a" style="left:1240px;top:428.8px;line-height:24px;font-size:15.1px;color:#3c3c3c;-webkit-text-stroke-width:0;width:176.8px;text-align:center;letter-spacing:-0.24px">2022-09-27 13:00:00</div>
<div class="a" style="left:1240px;top:448.4px;line-height:24px;font-size:15.1px;color:#3c3c3c;-webkit-text-stroke-width:0;width:176.8px;text-align:center;letter-spacing:-0.24px">2022-09-27 15:00:00</div>
</div></div>
<div class="a" style="left:206.8px;top:869.6px;width:1435.2px;height:1.2px;background:#ececec;"></div>
<div class="a" style="left:264px;top:869.8px;width:1098px;height:4.4px;background:#c4c4c4;border-radius:2px"></div>
<div class="a" style="left:1641px;top:433px;width:2px;height:438px;background:#ececec;"></div>
<div class="a" style="left:1641px;top:433.4px;width:4px;height:62px;background:#c4c4c4;"></div>
<div class="a" style="left:206.8px;top:874.8px;width:1435.2px;height:1.6px;background:#e4e4e4;"></div>
<div class="a" style="left:1465.2px;top:886.4px;line-height:24px;font-size:13px;letter-spacing:0.2px;color:#555;">总数：<span style="letter-spacing:0;font-size:14.6px">71</span>条</div>
<div class="a" style="left:1542.4px;top:886px;width:22.8px;height:23.2px;border:1.6px solid #e0e0e0;border-radius:2px"></div>
<div class="a" style="left:1572.4px;top:886px;width:24.4px;height:23.6px;border:1.8px solid #6aa0e6;border-radius:2px"></div>
<div class="a" style="left:1604.6px;top:886px;width:22.8px;height:23.2px;border:1.6px solid #e0e0e0;border-radius:2px"></div>
<div class="a" style="left:1572.4px;top:887.2px;line-height:24px;font-size:14.4px;color:#3a6fc0;-webkit-text-stroke-width:0;width:24.4px;text-align:center;">1</div>
<svg class="a" style="left:1550px;top:892px" width="10" height="12" viewBox="0 0 5 6"><path d="M3.5 0.8 L1.4 3 L3.5 5.2" fill="none" stroke="#c0c0c0" stroke-width="0.7"/></svg>
<svg class="a" style="left:1612px;top:892px" width="10" height="12" viewBox="0 0 5 6"><path d="M1.5 0.8 L3.6 3 L1.5 5.2" fill="none" stroke="#c0c0c0" stroke-width="0.7"/></svg></div></body></html>
